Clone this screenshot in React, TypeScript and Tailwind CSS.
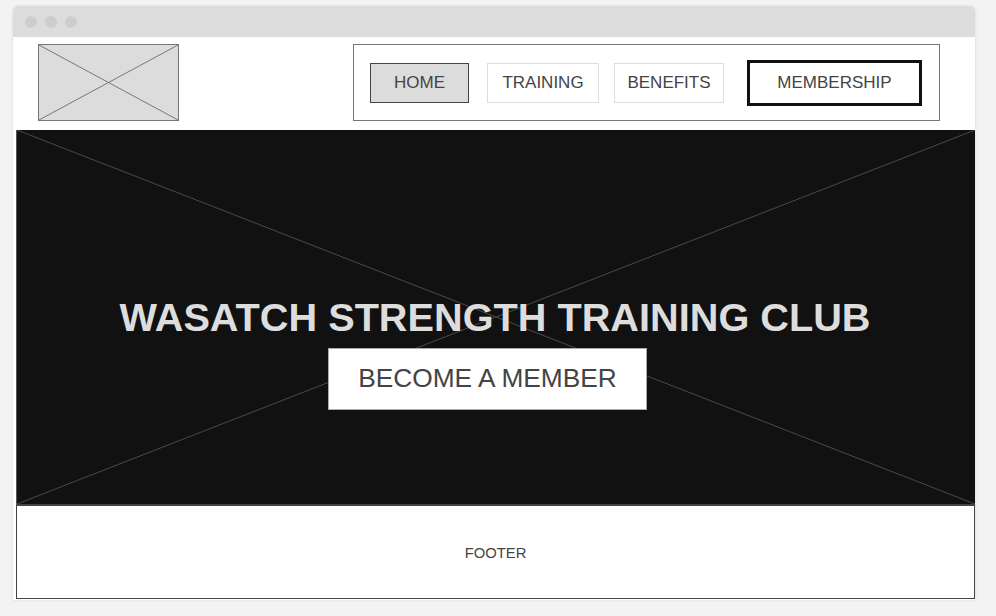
import React from "react";

function Placeholder({ stroke }: { stroke: string }) {
  return (
    <svg
      className="absolute inset-0 h-full w-full"
      viewBox="0 0 100 100"
      preserveAspectRatio="none"
    >
      <line x1="0" y1="0" x2="100" y2="100" stroke={stroke} strokeWidth="1" vectorEffect="non-scaling-stroke" />
      <line x1="100" y1="0" x2="0" y2="100" stroke={stroke} strokeWidth="1" vectorEffect="non-scaling-stroke" />
    </svg>
  );
}

const links = [
  { label: "HOME", cls: "w-[99px] bg-[#dcdcdc] border border-[#444]" },
  { label: "TRAINING", cls: "w-[112px] bg-white border border-[#ddd] ml-[18px]" },
  { label: "BENEFITS", cls: "w-[110px] bg-white border border-[#ddd] ml-[15px]" },
];

export default function App() {
  return (
    <div
      className="min-h-[616px] w-[996px] bg-[#f3f3f3] pt-[6px] pl-[13px]"
      style={{ fontFamily: '"Liberation Sans", Arial, sans-serif' }}
    >
      <div className="w-[962px] h-[594px] rounded-t-[5px] bg-white shadow-[0_0_3px_rgba(0,0,0,0.12)] flex flex-col">
        {/* TITLE BAR */}
        <div className="h-[31px] rounded-t-[5px] bg-[#dcdcdc] flex items-center gap-[8px] pl-[12px]">
          <span className="h-[12px] w-[12px] rounded-full bg-[#cdcdcd]" />
          <span className="h-[12px] w-[12px] rounded-full bg-[#cdcdcd]" />
          <span className="h-[12px] w-[12px] rounded-full bg-[#cdcdcd]" />
        </div>

        {/* HEADER */}
        <div className="h-[93px] flex items-start pt-[7px] pl-[25px]">
          <div className="relative h-[77px] w-[141px] bg-[#dcdcdc] border border-[#777]">
            <Placeholder stroke="#777" />
          </div>
          <div className="ml-[174px] h-[77px] w-[587px] border border-[#777] flex items-center pl-[16px]">
            {links.map((l) => (
              <div
                key={l.label}
                className={`h-[40px] flex items-center justify-center text-[17px] text-[#444] ${l.cls}`}
              >
                {l.label}
              </div>
            ))}
            <div className="ml-[23px] h-[46px] w-[175px] border-[3px] border-[#111] flex items-center justify-center text-[17px] text-[#444]">
              MEMBERSHIP
            </div>
          </div>
        </div>

        {/* HERO */}
        <div className="relative ml-[3px] h-[376px] bg-[#111] border-l border-[#555] border-b-2 border-b-[#444] flex flex-col items-center pt-[164px]">
          <Placeholder stroke="#4a4a4a" />
          <h1 className="relative mr-[2px] text-[39.7px] leading-[46px] font-bold text-[#dddddd]">
            WASATCH STRENGTH TRAINING CLUB
          </h1>
          <div className="relative mt-[8px] mr-[17px] h-[62px] w-[319px] bg-white border border-[#aaa] flex items-center justify-center text-[26.3px] text-[#444]">
            BECOME A MEMBER
          </div>
        </div>

        {/* FOOTER */}
        <div className="ml-[3px] h-[93px] border-l border-r border-b border-[#444] flex items-center justify-center pt-[2px] text-[14.8px] text-[#444]">
          FOOTER
        </div>
      </div>
    </div>
  );
}
